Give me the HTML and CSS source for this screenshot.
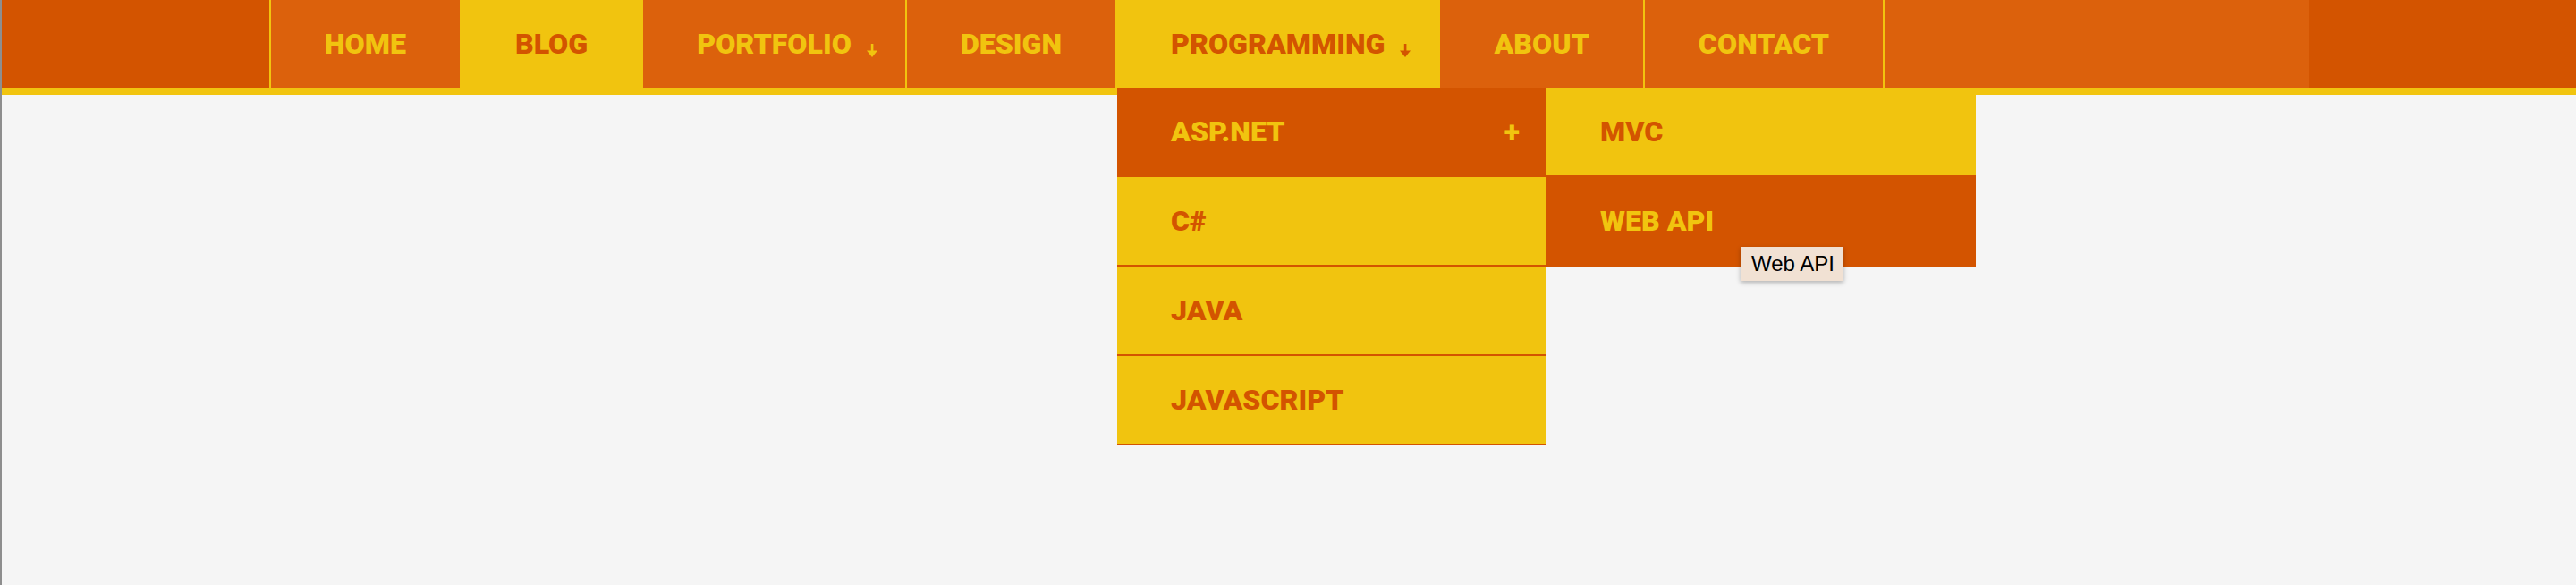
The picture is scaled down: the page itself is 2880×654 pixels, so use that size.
FILE: index.html
```html
<!DOCTYPE html>
<html lang="en">
<head>
<meta charset="utf-8">
<title>Menu</title>
<link rel="stylesheet" href="styles.css">
</head>
<body>
<div class="page">
  <nav class="nav">
    <ul class="menu">
      <li class="item"><a class="link" href="#">HOME</a></li>
      <li class="item active"><a class="link" href="#">BLOG</a></li>
      <li class="item has-sub"><a class="link" href="#">PORTFOLIO<svg class="arrow" viewBox="0 0 12 15" width="12" height="15"><rect x="4.8" y="0" width="2.6" height="11"/><polygon points="0,7.5 12,7.5 6,15"/></svg></a></li>
      <li class="item"><a class="link" href="#">DESIGN</a></li>
      <li class="item active has-sub"><a class="link" href="#">PROGRAMMING<svg class="arrow" viewBox="0 0 12 15" width="12" height="15"><rect x="4.8" y="0" width="2.6" height="11"/><polygon points="0,7.5 12,7.5 6,15"/></svg></a>
        <ul class="drop">
          <li class="d-item hover"><a class="d-link" href="#">ASP.NET<span class="plus">+</span></a>
            <ul class="sub">
              <li class="d-item"><a class="d-link" href="#">MVC</a></li>
              <li class="d-item hover"><a class="d-link" href="#">WEB API</a></li>
            </ul>
          </li>
          <li class="d-item"><a class="d-link" href="#">C#</a></li>
          <li class="d-item"><a class="d-link" href="#">JAVA</a></li>
          <li class="d-item"><a class="d-link" href="#">JAVASCRIPT</a></li>
        </ul>
      </li>
      <li class="item"><a class="link" href="#">ABOUT</a></li>
      <li class="item last"><a class="link" href="#">CONTACT</a></li>
    </ul>
  </nav>
  <div class="tooltip">Web API</div>
</div>
</body>
</html>
```

FILE: styles.css
```css
html, body {
  margin: 0;
  padding: 0;
}
body {
  background: #f5f5f5;
  font-family: Roboto, "Liberation Sans", Arial, sans-serif;
}
.page {
  position: relative;
  min-height: 654px;
  border-left: 2px solid #8e8e8e;
  box-sizing: border-box;
}
.nav {
  background: #d35400;
  border-bottom: 8px solid #f1c40f;
  height: 98px;
}
.menu {
  list-style: none;
  margin: 0 auto;
  padding: 0;
  width: 2280px;
  height: 98px;
  display: flex;
  background: #dc610c;
}
.item {
  position: relative;
  border-left: 2px solid #f1c40f;
}
.item.last {
  border-right: 2px solid #f1c40f;
}
.link {
  display: block;
  padding: 0 60px;
  line-height: 98px;
  font-size: 32.15px;
  font-weight: 900;
  color: #f1c40f;
  text-decoration: none;
}
.item.active {
  background: #f1c40f;
}
.item.active > .link {
  color: #d35400;
}
.arrow {
  position: absolute;
  right: 31px;
  top: 49px;
  fill: currentColor;
}
.drop, .sub {
  list-style: none;
  margin: 0;
  padding: 0;
  position: absolute;
  width: 480px;
  z-index: 5;
}
.drop {
  top: 100%;
  left: 0;
}
.sub {
  top: 0;
  left: 100%;
}
.d-item {
  position: relative;
  background: #f1c40f;
  border-bottom: 2px solid #d35400;
}
.d-link {
  display: block;
  position: relative;
  padding: 0 60px;
  line-height: 98px;
  font-size: 32.15px;
  font-weight: 900;
  color: #d35400;
  text-decoration: none;
}
.d-item.hover {
  background: #d35400;
}
.d-item.hover > .d-link {
  color: #f1c40f;
}
.plus {
  position: absolute;
  right: 30px;
  top: 0;
}
.tooltip {
  position: absolute;
  left: 1944px;
  top: 276px;
  z-index: 10;
  height: 38px;
  line-height: 38px;
  padding: 0 10px 0 12px;
  background: #f1e1d3;
  color: #000;
  font-family: "Liberation Sans", Arial, sans-serif;
  font-size: 24px;
  box-shadow: 0 2px 5px rgba(0, 0, 0, 0.28);
}
```
